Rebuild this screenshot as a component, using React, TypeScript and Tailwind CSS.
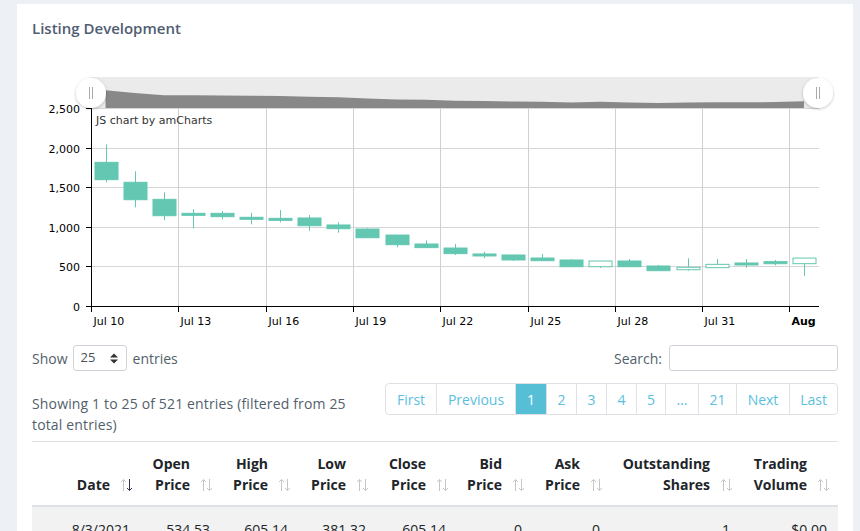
import React from "react";

type Candle = [number, number, number, number]; // open, high, low, close

const candles: Candle[] = [
  [1814, 2041, 1562, 1595],
  [1562, 1700, 1246, 1342],
  [1347, 1435, 1082, 1140],
  [1170, 1221, 981, 1153],
  [1170, 1200, 1095, 1128],
  [1120, 1178, 1031, 1103],
  [1107, 1212, 1057, 1090],
  [1111, 1149, 951, 1014],
  [1023, 1057, 926, 976],
  [972, 981, 862, 862],
  [896, 896, 741, 774],
  [783, 829, 737, 737],
  [732, 783, 644, 661],
  [657, 686, 602, 636],
  [644, 644, 568, 581],
  [606, 657, 572, 572],
  [581, 593, 496, 496],
  [496, 568, 480, 568],
  [568, 593, 496, 496],
  [505, 518, 446, 446],
  [458, 602, 446, 489],
  [484, 593, 484, 526],
  [543, 593, 484, 522],
  [560, 581, 513, 534],
  [534.53, 605.14, 381.32, 605.14],
];

const X0 = 91;
const X1 = 819;
const DAY = 29.1;
const yv = (v: number) => 306 - v * 0.0792;
const cx = (i: number) => X0 + DAY * i + DAY / 2;
const GREEN = "#63c7b1";

const yTicks = [0, 500, 1000, 1500, 2000, 2500];
const xTicks = ["Jul 10", "Jul 13", "Jul 16", "Jul 19", "Jul 22", "Jul 25", "Jul 28", "Jul 31", "Aug"];

function Chart() {
  const area =
    `M${cx(0)},108 ` +
    candles.map((c, i) => `L${cx(i).toFixed(1)},${(108 - c[3] * 0.0111).toFixed(1)}`).join(" ") +
    ` L${cx(candles.length - 1)},108 Z`;

  return (
    <svg
      width={806}
      height={285}
      viewBox="32 50 806 285"
      className="block"
      style={{ fontFamily: '"DejaVu Sans", Verdana, sans-serif' }}
    >
      <defs>
        <filter id="grip" x="-50%" y="-50%" width="200%" height="200%">
          <feDropShadow dx="0" dy="1" stdDeviation="1.5" floodColor="#000" floodOpacity="0.25" />
        </filter>
      </defs>

      {/* grid */}
      {yTicks.map((t) => (
        <line key={t} x1={X0} x2={X1} y1={Math.round(yv(t)) + 0.5} y2={Math.round(yv(t)) + 0.5} stroke="#d6d6d6" />
      ))}
      {xTicks.map((_, k) => {
        const x = Math.round(X0 + DAY * 3 * k) + 0.5;
        return <line key={k} x1={x} x2={x} y1={108} y2={306} stroke="#d0d0d0" />;
      })}

      {/* candles */}
      {candles.map(([o, h, l, c], i) => {
        const x = Math.round(cx(i)) + 0.5;
        const top = yv(Math.max(o, c));
        const bot = yv(Math.min(o, c));
        const up = c > o;
        return (
          <g key={i}>
            <line x1={x} x2={x} y1={yv(h)} y2={yv(l)} stroke={GREEN} />
            <rect
              x={x - 11.5}
              y={top}
              width={23}
              height={Math.max(2, bot - top)}
              fill={up ? "#fff" : GREEN}
              stroke={GREEN}
            />
          </g>
        );
      })}

      <text x={96} y={124} fontSize={11} fill="#333">JS chart by amCharts</text>

      {/* axes */}
      <line x1={91.5} x2={91.5} y1={108} y2={306.5} stroke="#000" />
      <line x1={91} x2={X1} y1={306.5} y2={306.5} stroke="#000" />
      {yTicks.map((t) => {
        const y = Math.round(yv(t)) + 0.5;
        return (
          <g key={t}>
            <line x1={86} x2={91} y1={y} y2={y} stroke="#000" />
            <text x={80} y={y + 4} fontSize={11} textAnchor="end" fill="#000">
              {t.toLocaleString("en-US")}
            </text>
          </g>
        );
      })}
      {xTicks.map((lab, k) => {
        const x = Math.round(X0 + DAY * 3 * k) + 0.5;
        return (
          <g key={lab}>
            <line x1={x} x2={x} y1={306} y2={312} stroke="#000" />
            <text x={x + 2} y={325} fontSize={11} fill="#000" fontWeight={lab === "Aug" ? 700 : 400}>
              {lab}
            </text>
          </g>
        );
      })}

      {/* scrollbar */}
      <rect x={91} y={77} width={727} height={31} fill="#ebebeb" />
      <path d={area} fill="#888" />
      {[91, 818].map((gx) => (
        <g key={gx}>
          <circle cx={gx} cy={93} r={15} fill="#fff" filter="url(#grip)" />
          <line x1={gx - 1.5} x2={gx - 1.5} y1={87} y2={99} stroke="#aaa" />
          <line x1={gx + 1.5} x2={gx + 1.5} y1={87} y2={99} stroke="#aaa" />
        </g>
      ))}
    </svg>
  );
}

function SortIcon({ active }: { active?: boolean }) {
  return (
    <svg width={13} height={14} viewBox="0 0 13 14" className="shrink-0 mb-[3px]">
      <g stroke="#c6c6c6" strokeWidth={1} fill="none">
        <line x1={3.5} x2={3.5} y1={1.5} y2={13} />
        <polyline points="1,4 3.5,1.5 6,4" />
      </g>
      <g stroke={active ? "#2f3448" : "#c6c6c6"} strokeWidth={1} fill="none">
        <line x1={9.5} x2={9.5} y1={1} y2={12.5} />
        <polyline points="7,10 9.5,12.5 12,10" />
      </g>
    </svg>
  );
}

const columns: { lines: string[]; w: string; active?: boolean }[] = [
  { lines: ["Date"], w: "w-[109px]", active: true },
  { lines: ["Open", "Price"], w: "w-[80px]" },
  { lines: ["High", "Price"], w: "w-[78px]" },
  { lines: ["Low", "Price"], w: "w-[78px]" },
  { lines: ["Close", "Price"], w: "w-[80px]" },
  { lines: ["Bid", "Price"], w: "w-[76px]" },
  { lines: ["Ask", "Price"], w: "w-[78px]" },
  { lines: ["Outstanding", "Shares"], w: "w-[130px]" },
  { lines: ["Trading", "Volume"], w: "w-[97px]" },
];

const row = ["8/3/2021", "534.53", "605.14", "381.32", "605.14", "0", "0", "1", "$0.00"];

const pages: { label: string; w: string; active?: boolean }[] = [
  { label: "First", w: "w-[50px]" },
  { label: "Previous", w: "w-[79px]" },
  { label: "1", w: "w-[31px]", active: true },
  { label: "2", w: "w-[30px]" },
  { label: "3", w: "w-[30px]" },
  { label: "4", w: "w-[30px]" },
  { label: "5", w: "w-[29px]" },
  { label: "…", w: "w-[33px]" },
  { label: "21", w: "w-[38px]" },
  { label: "Next", w: "w-[53px]" },
  { label: "Last", w: "w-[48px]" },
];

export default function App() {
  return (
    <div
      className="min-h-screen bg-[#edf1f5] pt-[4px] pl-[17px] pr-[7px] overflow-hidden"
      style={{ fontFamily: '"Open Sans", "Liberation Sans", sans-serif' }}
    >
      <div className="bg-white w-[836px] px-[15px] pt-[13px] pb-6">
        <h2 className="text-[15px] leading-[22px] font-semibold text-[#4f5d72]">Listing Development</h2>

        <div className="mt-[11px]">
          <Chart />
        </div>

        <div className="mt-[10px] flex items-center justify-between h-[26px] text-[14px] text-[#525f6c]">
          <div className="flex items-center">
            <span>Show</span>
            <div className="ml-[5px] mr-[6px] w-[54px] h-[26px] border border-[#ced4da] rounded-[3px] flex items-center justify-between pl-[7px] pr-[8px]">
              <span className="text-[13px] text-[#495057]">25</span>
              <svg width={8} height={11} viewBox="0 0 8 11">
                <polygon points="0,4.5 4,0.5 8,4.5" fill="#333" />
                <polygon points="0,6.5 4,10.5 8,6.5" fill="#333" />
              </svg>
            </div>
            <span>entries</span>
          </div>
          <div className="flex items-center">
            <span>Search:</span>
            <div className="ml-[7px] w-[169px] h-[26px] border border-[#ced4da] rounded-[3px]" />
          </div>
        </div>

        <div className="mt-[12px] flex justify-between items-start">
          <div className="pt-[10px] text-[14px] leading-[21px] tracking-[0.15px] text-[#525f6c]">
            Showing 1 to 25 of 521 entries (filtered from 25
            <br />
            total entries)
          </div>
          <div className="flex h-[32px] border border-[#dee2e6] rounded-[4px] text-[14px]">
            {pages.map((p, i) => (
              <div
                key={p.label}
                className={`${p.w} flex items-center justify-center ${i > 0 ? "border-l border-[#dee2e6]" : ""} ${
                  p.active ? "bg-[#56bfd6] text-white border-[#56bfd6]" : "text-[#5bc0de]"
                }`}
              >
                {p.label}
              </div>
            ))}
          </div>
        </div>

        <div className="mt-[6px] border-t border-[#dee2e6]">
          <div className="flex border-b-2 border-[#dee2e6] pt-[11px] pb-[10px]">
            {columns.map((c) => (
              <div key={c.lines[0]} className={`${c.w} flex items-end justify-end gap-[10px] pr-[8px]`}>
                <div className="text-right text-[14px] leading-[21px] font-bold text-[#212529]">
                  {c.lines.map((l) => (
                    <div key={l}>{l}</div>
                  ))}
                </div>
                <SortIcon active={c.active} />
              </div>
            ))}
          </div>
          <div className="flex bg-[#f2f2f2] py-[12px] text-[14px] leading-[21px] text-[#212529]">
            {row.map((v, i) => (
              <div key={i} className={`${columns[i].w} text-right pr-[11px]`}>
                {v}
              </div>
            ))}
          </div>
        </div>
      </div>
    </div>
  );
}
